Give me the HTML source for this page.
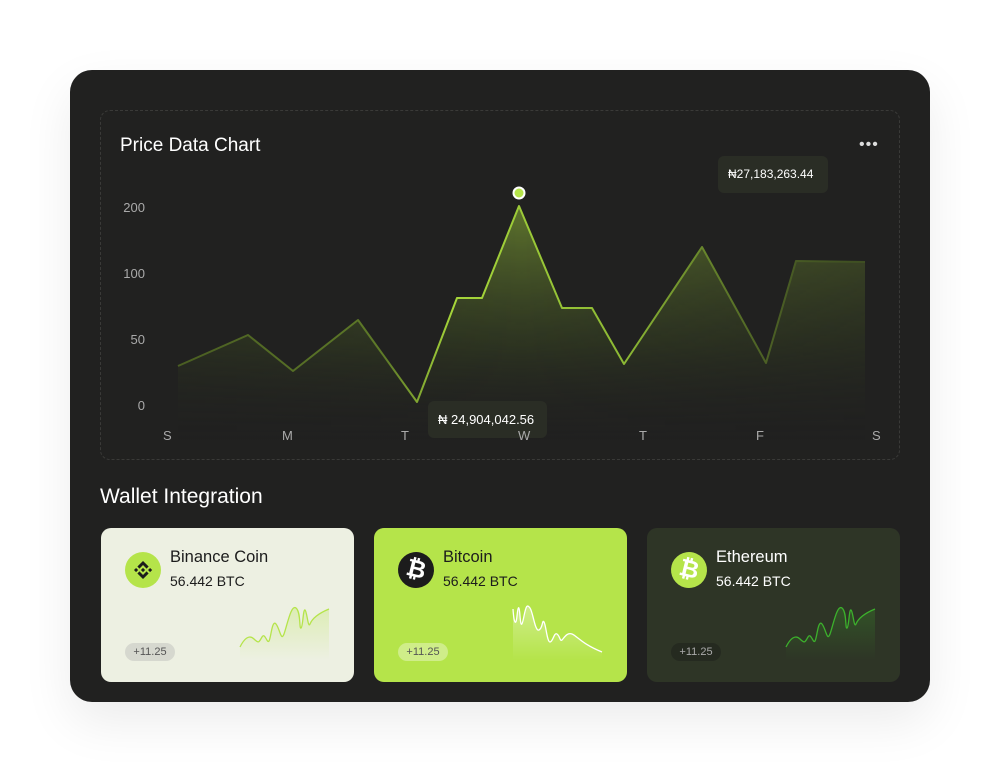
<!DOCTYPE html>
<html><head><meta charset="utf-8">
<style>
*{margin:0;padding:0;box-sizing:border-box}
body{width:1000px;height:772px;background:#fff;font-family:"Liberation Sans",sans-serif;position:relative;overflow:hidden}
.main{position:absolute;left:70px;top:70px;width:860px;height:632px;background:#212120;border-radius:22px;box-shadow:0 20px 50px rgba(0,0,0,.08)}
.chart{position:absolute;left:100px;top:110px;width:800px;height:350px;border:1px dashed #3a3a38;border-radius:10px}
.t{position:absolute;white-space:nowrap}
.card{position:absolute;top:528px;width:253px;height:154px;border-radius:10px;overflow:hidden}
.ic{position:absolute;left:24px;top:24px;width:36px;height:36px;border-radius:50%}
.nm{position:absolute;left:69px;top:20px;font-size:16.5px}
.sb{position:absolute;left:69px;top:45px;font-size:14px}
.bd{position:absolute;left:24px;top:115px;width:50px;height:18px;border-radius:9px;font-size:11px;line-height:18px;text-align:center}
.sp{position:absolute;left:138px;top:76px}
</style></head><body>
<div class="main"></div>
<div class="chart"></div>
<div class="t" style="left:120px;top:135px;font-size:19px;color:#fff">Price Data Chart</div>
<div class="t" style="left:859px;top:136px;font-size:16px;color:#ddd;letter-spacing:1px">•••</div>
<div class="t" style="left:120px;top:200px;font-size:13px;color:#aaa;width:25px;text-align:right">200</div>
<div class="t" style="left:120px;top:266px;font-size:13px;color:#aaa;width:25px;text-align:right">100</div>
<div class="t" style="left:120px;top:332px;font-size:13px;color:#aaa;width:25px;text-align:right">50</div>
<div class="t" style="left:120px;top:398px;font-size:13px;color:#aaa;width:25px;text-align:right">0</div>
<svg style="position:absolute;left:0;top:0" width="1000" height="772">
<defs>
<linearGradient id="fg" x1="0" y1="0" x2="0" y2="1"><stop offset="0" stop-color="#7a9a33" stop-opacity=".7"/><stop offset=".6" stop-color="#3b4a22" stop-opacity=".45"/><stop offset="1" stop-color="#212120" stop-opacity="0"/></linearGradient>
<linearGradient id="hm" x1="0" y1="0" x2="1" y2="0"><stop offset="0" stop-color="#fff" stop-opacity=".7"/><stop offset=".5" stop-color="#fff" stop-opacity="1"/><stop offset="1" stop-color="#fff" stop-opacity=".6"/></linearGradient>
<mask id="m"><rect x="178" y="190" width="688" height="260" fill="url(#hm)"/></mask>
<linearGradient id="lg" x1="178" y1="0" x2="866" y2="0" gradientUnits="userSpaceOnUse"><stop offset="0" stop-color="#4a5e22"/><stop offset=".3" stop-color="#5e7a28"/><stop offset=".4" stop-color="#a6d63a"/><stop offset=".65" stop-color="#8cb834"/><stop offset=".85" stop-color="#4c6025"/><stop offset="1" stop-color="#3e4e22"/></linearGradient>
</defs>
<path mask="url(#m)" d="M178,366 L248,335 L293,371 L358,320 L417,402 L457,298 L482,298 L519,206 L562,308 L592,308 L624,364 L702,247 L766,363 L796,261 L865,262 L865,440 L178,440Z" fill="url(#fg)"/>
<path d="M178,366 L248,335 L293,371 L358,320 L417,402 L457,298 L482,298 L519,206 L562,308 L592,308 L624,364 L702,247 L766,363 L796,261 L865,262" fill="none" stroke="url(#lg)" stroke-width="2" stroke-linejoin="round"/>
<circle cx="519" cy="193" r="5.5" fill="#b5e44a" stroke="#fff" stroke-width="2"/>
</svg>
<div class="t" style="left:428px;top:401px;width:119px;height:37px;background:#2a2d25;border-radius:6px"></div>
<div class="t" style="left:438px;top:412px;font-size:13px;color:#fff">₦ 24,904,042.56</div>
<div class="t" style="left:718px;top:156px;width:110px;height:37px;background:#2a2d25;border-radius:6px"></div>
<div class="t" style="left:728px;top:167px;font-size:12px;color:#fff">₦27,183,263.44</div>
<div class="t" style="left:163px;top:428px;font-size:13px;color:#aaa">S</div>
<div class="t" style="left:282px;top:428px;font-size:13px;color:#aaa">M</div>
<div class="t" style="left:401px;top:428px;font-size:13px;color:#aaa">T</div>
<div class="t" style="left:518px;top:428px;font-size:13px;color:#aaa">W</div>
<div class="t" style="left:639px;top:428px;font-size:13px;color:#aaa">T</div>
<div class="t" style="left:756px;top:428px;font-size:13px;color:#aaa">F</div>
<div class="t" style="left:872px;top:428px;font-size:13px;color:#aaa">S</div>
<div class="t" style="left:100px;top:485px;font-size:21px;color:#fff">Wallet Integration</div>

<div class="card" style="left:101px;background:#edf0e2">
<div class="ic" style="background:#b5e44a"><svg width="36" height="36" viewBox="0 0 36 36"><g transform="translate(9,9) scale(0.143)" fill="#1c1c1c"><path d="M38.171 53.203l24.829-24.829 24.841 24.841 14.447-14.447L63 0 23.724 38.756zM0 63l14.447-14.447L28.894 63 14.447 77.447zM38.171 72.797L63 97.626l24.841-24.841 14.454 14.44L63 126 23.724 87.244zm59.935-9.797l14.447-14.447L127 63l-14.447 14.447zM77.654 62.993L63 48.339 48.354 62.985 63 77.631z"/></g></svg></div>
<div class="nm" style="color:#1c1c1c">Binance Coin</div><div class="sb" style="color:#1c1c1c">56.442 BTC</div>
<div class="bd" style="background:#d6d8cf;color:#555">+11.25</div>
<svg class="sp" width="92" height="58" viewBox="0 0 92 58"><defs><linearGradient id="s1" x1="0" y1="0" x2="0" y2="1"><stop offset="0" stop-color="#b5e44a" stop-opacity=".3"/><stop offset="1" stop-color="#b5e44a" stop-opacity="0"/></linearGradient></defs><path d="M1,43 C5,35 10,30 15,35 S20,38 23,33 S28,40 30,37 S33,15 37,20 S42,38 45,30 S52,0 57,4 S60,25 62,24 S64,5 66,6 S69,25 71,20 S78,10 90,5 L90,56 L1,56Z" fill="url(#s1)"/><path d="M1,43 C5,35 10,30 15,35 S20,38 23,33 S28,40 30,37 S33,15 37,20 S42,38 45,30 S52,0 57,4 S60,25 62,24 S64,5 66,6 S69,25 71,20 S78,10 90,5" fill="none" stroke="#b5e44a" stroke-width="1.3"/></svg>
</div>

<div class="card" style="left:374px;background:#b5e44a">
<div class="ic" style="background:#1c1c1c;color:#fff;font-size:24px;font-weight:bold;text-align:center;line-height:36px;transform:rotate(14deg)">₿</div>
<div class="nm" style="color:#1c1c1c">Bitcoin</div><div class="sb" style="color:#1c1c1c">56.442 BTC</div>
<div class="bd" style="background:rgba(255,255,255,.35);color:#555">+11.25</div>
<svg class="sp" width="92" height="58" viewBox="0 0 92 58"><defs><linearGradient id="s2" x1="0" y1="0" x2="0" y2="1"><stop offset="0" stop-color="#fff" stop-opacity=".35"/><stop offset="1" stop-color="#fff" stop-opacity="0"/></linearGradient></defs><path d="M1,5 C2,20 4,22 5,12 S7,0 8,12 S10,22 12,12 S15,0 18,4 S23,28 27,26 S30,15 32,18 S35,38 38,38 S42,28 45,30 S48,38 50,36 S55,28 60,30 S70,40 90,48 L90,56 L1,56Z" fill="url(#s2)"/><path d="M1,5 C2,20 4,22 5,12 S7,0 8,12 S10,22 12,12 S15,0 18,4 S23,28 27,26 S30,15 32,18 S35,38 38,38 S42,28 45,30 S48,38 50,36 S55,28 60,30 S70,40 90,48" fill="none" stroke="#fff" stroke-width="1.3"/></svg>
</div>

<div class="card" style="left:647px;background:#2e3526">
<div class="ic" style="background:#b5e44a;color:#fff;font-size:24px;font-weight:bold;text-align:center;line-height:36px;transform:rotate(14deg)">₿</div>
<div class="nm" style="color:#fff">Ethereum</div><div class="sb" style="color:#fff">56.442 BTC</div>
<div class="bd" style="background:#252a20;color:#aaa">+11.25</div>
<svg class="sp" width="92" height="58" viewBox="0 0 92 58"><defs><linearGradient id="s3" x1="0" y1="0" x2="0" y2="1"><stop offset="0" stop-color="#3a8a2a" stop-opacity=".35"/><stop offset="1" stop-color="#3a8a2a" stop-opacity="0"/></linearGradient></defs><path d="M1,43 C5,35 10,30 15,35 S20,38 23,33 S28,40 30,37 S33,15 37,20 S42,38 45,30 S52,0 57,4 S60,25 62,24 S64,5 66,6 S69,25 71,20 S78,10 90,5 L90,56 L1,56Z" fill="url(#s3)"/><path d="M1,43 C5,35 10,30 15,35 S20,38 23,33 S28,40 30,37 S33,15 37,20 S42,38 45,30 S52,0 57,4 S60,25 62,24 S64,5 66,6 S69,25 71,20 S78,10 90,5" fill="none" stroke="#3cb02c" stroke-width="1.3"/></svg>
</div>
</body></html>
